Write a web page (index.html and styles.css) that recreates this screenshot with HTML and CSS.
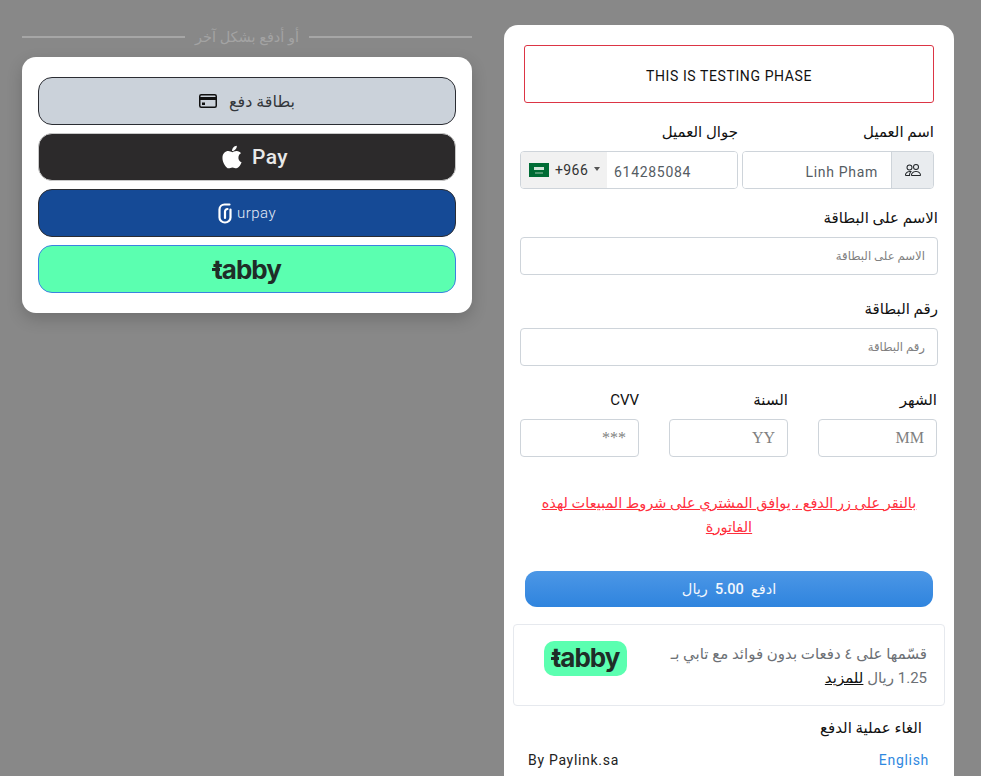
FILE: index.html
```html
<!DOCTYPE html>
<html lang="ar">

<head>
  <meta charset="utf-8">
  <title>Paylink</title>
  <link rel="stylesheet" href="styles.css">
</head>

<body>
  <div class="page">
    <div class="other-pay">
      <div class="or-line">
        <span class="or-rule"></span>
        <span class="or-text" dir="rtl">أو أدفع بشكل آخر</span>
        <span class="or-rule"></span>
      </div>
      <div class="pay-card">
        <button type="button" class="pay-btn btn-card">
          <svg width="18" height="14" viewBox="0 0 18 14">
            <rect x="0.75" y="0.75" width="16.5" height="12.5" rx="1.5" fill="none" stroke="#111" stroke-width="1.5" />
            <rect x="1" y="3" width="16" height="3" fill="#111" />
            <rect x="3" y="8.5" width="3" height="2.5" fill="#111" />
          </svg>
          <span dir="rtl">بطاقة دفع</span>
        </button>
        <button type="button" class="pay-btn btn-apple">
          <svg width="22" height="26" viewBox="0 0 384 512">
            <path fill="#fff" d="M318.7 268.7c-.2-36.7 16.4-64.4 50-84.8-18.8-26.9-47.2-41.7-84.7-44.6-35.5-2.8-74.3 20.7-88.5 20.7-15 0-49.4-19.7-76.4-19.7C63.3 141.2 4 184.8 4 273.5q0 39.3 14.4 81.2c12.8 36.7 59 126.7 107.2 125.2 25.2-.6 43-17.9 75.8-17.9 31.8 0 48.3 17.9 76.4 17.9 48.6-.7 90.4-82.5 102.6-119.3-65.2-30.7-61.7-90-61.7-91.9zm-56.6-164.2c27.3-32.4 24.8-61.9 24-72.5-24.1 1.4-52 16.4-67.9 34.9-17.5 19.8-27.8 44.3-25.6 71.9 26.1 2 49.9-11.4 69.5-34.3z" />
          </svg>
          <span>Pay</span>
        </button>
        <button type="button" class="pay-btn btn-urpay">
          <svg width="14" height="21" viewBox="0 0 14 21" fill="none" stroke="#fff" stroke-width="2.2" stroke-linecap="round">
            <path d="M11.500 1.500H6.500A5 5 0 0 0 1.500 6.500V14.500A5.500 5 0 0 0 12.500 14.500V6.500" />
            <path d="M7 15V8.500A2.500 2.500 0 0 1 9.500 6" />
          </svg>
          <span>urpay</span>
        </button>
        <button type="button" class="pay-btn btn-tabby"><span class="tabby-word"><span class="tabby-t">t</span>abby</span></button>
      </div>
    </div>

    <div class="checkout" dir="rtl">
      <div class="test-alert" dir="ltr">THIS IS TESTING PHASE</div>

      <div class="customer-row">
        <div class="customer-name">
          <label class="field-label">اسم العميل</label>
          <div class="input-group">
            <span class="group-icon">
              <svg width="16" height="16" viewBox="0 0 16 16">
                <path fill="#212529" d="M15 14s1 0 1-1-1-4-5-4-5 3-5 4 1 1 1 1zm-7.978-1A.261.261 0 0 1 7 12.996c.001-.264.167-1.03.76-1.72C8.312 10.629 9.282 10 11 10c1.717 0 2.687.63 3.24 1.276.593.69.758 1.457.76 1.72l-.008.002a.274.274 0 0 1-.014.002H7.022ZM11 7a2 2 0 1 0 0-4 2 2 0 0 0 0 4m3-2a3 3 0 1 1-6 0 3 3 0 0 1 6 0M6.936 9.28a5.88 5.88 0 0 0-1.23-.247A7.35 7.35 0 0 0 5 9c-4 0-5 3-5 4 0 .667.333 1 1 1h4.216A2.238 2.238 0 0 1 5 13c0-1.01.377-2.042 1.09-2.904.243-.294.526-.569.846-.816M4.92 10A5.493 5.493 0 0 0 4 13H1c0-.26.164-1.03.76-1.724.545-.636 1.492-1.256 3.16-1.275ZM1.5 5.5a3 3 0 1 1 6 0 3 3 0 0 1-6 0m3-2a2 2 0 1 0 0 4 2 2 0 0 0 0-4" />
              </svg>
            </span>
            <input class="group-input name-input" type="text" value="Linh Pham" dir="ltr">
          </div>
        </div>
        <div class="customer-phone">
          <label class="field-label">جوال العميل</label>
          <div class="phone-group" dir="ltr">
            <span class="dial-code">
              <svg class="flag" width="20" height="14" viewBox="0 0 20 14">
                <rect width="20" height="14" fill="#006c35" />
                <rect x="5" y="4" width="10" height="3" fill="#cfe3d7" />
                <rect x="6" y="9.500" width="8" height="1" fill="#9cc7ae" />
              </svg>
              <span>+966</span>
              <span class="caret"></span>
            </span>
            <input class="phone-input" type="text" value="614285084">
          </div>
        </div>
      </div>

      <div class="field">
        <label class="field-label">الاسم على البطاقة</label>
        <input class="text-input" type="text" placeholder="الاسم على البطاقة">
      </div>
      <div class="field">
        <label class="field-label">رقم البطاقة</label>
        <input class="text-input" type="text" placeholder="رقم البطاقة">
      </div>

      <div class="expiry-row">
        <div class="expiry-col">
          <label class="field-label">الشهر</label>
          <input class="text-input serif-input" type="text" placeholder="MM">
        </div>
        <div class="expiry-col">
          <label class="field-label">السنة</label>
          <input class="text-input serif-input" type="text" placeholder="YY">
        </div>
        <div class="expiry-col">
          <label class="field-label">CVV</label>
          <input class="text-input serif-input" type="text" placeholder="***">
        </div>
      </div>

      <a class="terms" href="#">بالنقر على زر الدفع ، يوافق المشتري على شروط المبيعات لهذه الفاتورة</a>

      <button type="button" class="submit-btn">ادفع &nbsp;5.00&nbsp; ريال</button>

      <div class="tabby-box">
        <div class="tabby-text">
          قسّمها على ٤ دفعات بدون فوائد مع تابي بـ<br>
          1.25 ريال <a href="#">للمزيد</a>
        </div>
        <div class="tabby-logo" dir="ltr"><span class="tabby-word"><span class="tabby-t">t</span>abby</span></div>
      </div>

      <a class="cancel" href="#">الغاء عملية الدفع</a>

      <div class="foot-row">
        <a class="lang" href="#">English</a>
        <span class="by" dir="ltr">By Paylink.sa</span>
      </div>
    </div>
  </div>
</body>

</html>
```

FILE: styles.css
```css
html,
body {
  margin: 0;
  height: 100%;
  overflow: hidden;
}

body {
  background-color: #888888;
  font-family: Roboto, 'DejaVu Sans', sans-serif;
  color: #212529;
}

.page {
  display: flex;
  gap: 32px;
  padding: 25px 0 0 22px;
}

/* left column */
.other-pay {
  width: 450px;
}

.or-line {
  display: flex;
  align-items: center;
  gap: 10px;
  height: 24px;
  margin-bottom: 8px;
}

.or-rule {
  flex: 1;
  height: 2px;
  background-color: #a6a6a6;
}

.or-text {
  color: #a3a3a3;
  font-size: 14.5px;
}

.pay-card {
  display: flex;
  flex-direction: column;
  gap: 8px;
  padding: 20px 16px;
  background-color: #fff;
  border-radius: 14px;
  box-shadow: 0 6px 16px rgba(0, 0, 0, 0.18);
}

.pay-btn {
  display: flex;
  align-items: center;
  justify-content: center;
  height: 48px;
  padding: 0;
  border: 1px solid #2b2d33;
  border-radius: 14px;
  font-family: inherit;
}

.btn-card {
  gap: 12px;
  background-color: #cbd2da;
  color: #33373c;
  font-size: 16px;
}

.btn-apple {
  gap: 9px;
  padding-left: 15px;
  background-color: #2c2a2b;
  border-color: #c8c8c8;
  color: #e8e8e8;
  font-size: 21px;
  font-weight: 500;
  letter-spacing: 0.4px;
}

.btn-urpay {
  gap: 5px;
  background-color: #154a96;
  color: #e4ecf6;
  font-size: 15px;
  font-weight: 300;
  letter-spacing: 0.5px;
}

.btn-tabby {
  background-color: #5bffb0;
  border-color: #3b82e0;
}

.tabby-word {
  color: #1f2d28;
  font-family: Inter, Roboto, sans-serif;
  font-size: 26px;
  font-weight: 700;
  letter-spacing: -1px;
}

/* the t of the tabby mark has a second bar */
.tabby-t {
  position: relative;
}

.tabby-t::before {
  content: "";
  position: absolute;
  left: -1px;
  top: 48%;
  width: 8px;
  height: 3px;
  background-color: #1f2d28;
}

/* right column */
.checkout {
  width: 450px;
  min-height: calc(100vh - 25px);
  box-sizing: border-box;
  padding: 20px 16px 0;
  background-color: #fff;
  border-radius: 14px 14px 0 0;
}

.test-alert {
  margin: 0 4px 20px;
  height: 58px;
  box-sizing: border-box;
  padding-top: 4px;
  display: flex;
  align-items: center;
  justify-content: center;
  border: 1px solid #dc3545;
  border-radius: 3px;
  color: #111;
  font-size: 14px;
  letter-spacing: 0.6px;
}

.field-label {
  display: block;
  height: 18px;
  margin-bottom: 10px;
  line-height: 18px;
  color: #111;
  font-size: 15px;
}

.customer-row {
  display: flex;
  gap: 4px;
  padding-right: 4px;
  margin-bottom: 20px;
}

.customer-name {
  width: 192px;
}

.customer-phone {
  width: 218px;
}

.input-group,
.phone-group {
  display: flex;
  height: 38px;
  box-sizing: border-box;
  border: 1px solid #ced4da;
  border-radius: 4px;
  overflow: hidden;
}

.group-icon {
  display: flex;
  align-items: center;
  justify-content: center;
  width: 41px;
  background-color: #e9ecef;
  border-left: 1px solid #ced4da;
}

.group-input,
.phone-input {
  flex: 1;
  min-width: 0;
  border: 0;
  outline: 0;
  font-family: inherit;
  font-size: 14px;
  letter-spacing: 0.7px;
  color: #555c63;
}

.name-input {
  padding: 4px 13px 0 0;
  text-align: right;
}

.phone-input {
  padding: 4px 0 0 7px;
}

.dial-code {
  display: flex;
  align-items: center;
  gap: 6px;
  width: 86px;
  box-sizing: border-box;
  padding-left: 8px;
  background-color: #f1f1f1;
  color: #333;
  font-size: 14px;
  letter-spacing: 0.4px;
}

.caret {
  width: 0;
  height: 0;
  margin-bottom: 3px;
  border-left: 3px solid transparent;
  border-right: 3px solid transparent;
  border-top: 4px solid #555;
}

.field {
  margin-bottom: 25px;
}

.text-input {
  display: block;
  width: 100%;
  height: 38px;
  box-sizing: border-box;
  padding: 0 12px;
  border: 1px solid #ced4da;
  border-radius: 4px;
  outline: 0;
  font-family: inherit;
  font-size: 11.7px;
}

.text-input::placeholder {
  color: #808080;
}

.serif-input {
  font-family: 'Liberation Serif', serif;
  font-size: 16px;
}

.expiry-row {
  display: flex;
  gap: 30px;
  padding-right: 1px;
}

.expiry-col {
  width: 119px;
}

.terms {
  display: block;
  margin: 35px 20px 31px;
  color: #ff2f3d;
  font-size: 14.5px;
  line-height: 24px;
  text-align: center;
}

.submit-btn {
  display: block;
  width: 408px;
  height: 36px;
  margin: 0 5px 17px;
  border: 0;
  border-radius: 12px;
  background: linear-gradient(#4c97e6, #2f84de);
  color: #f2f7fd;
  font-family: inherit;
  font-size: 14.5px;
  font-weight: 500;
}

.tabby-box {
  display: flex;
  justify-content: space-between;
  align-items: flex-start;
  height: 82px;
  box-sizing: border-box;
  margin: 0 -7px;
  padding: 17px 17px 0 30px;
  border: 1px solid #e6e9ee;
  border-radius: 4px;
}

.tabby-text {
  color: #6c7075;
  font-size: 15px;
  line-height: 24px;
}

.tabby-text a {
  color: #111;
}

.tabby-logo {
  width: 83px;
  height: 35px;
  margin-top: -1px;
  background-color: #5bffb0;
  border-radius: 10px;
  line-height: 34px;
  text-align: center;
}

.cancel {
  display: block;
  margin: 13px 0 0;
  padding-right: 16px;
  color: #111;
  font-size: 15px;
  line-height: 18px;
  text-decoration: none;
}

.foot-row {
  display: flex;
  justify-content: space-between;
  margin-top: 14px;
  padding: 0 9px 0 8px;
  font-size: 14px;
  letter-spacing: 0.7px;
  line-height: 18px;
}

.lang {
  color: #2f88e0;
  text-decoration: none;
}

.by {
  color: #222;
}
```
